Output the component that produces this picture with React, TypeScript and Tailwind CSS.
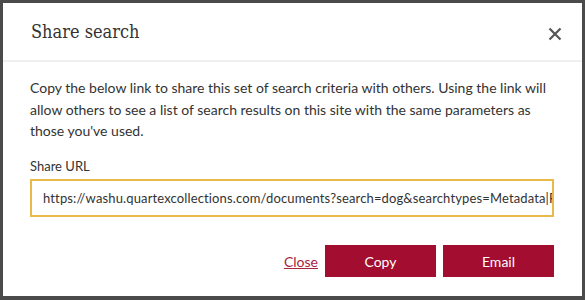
import React from "react";

export default function App() {
  return (
    <div className="w-[585px] h-[300px] bg-[#4b4b4b] pt-[3px] pl-[3px] pr-[3px] pb-[4px]">
      <div className="w-full h-full bg-white flex flex-col" style={{ fontFamily: "Lato, 'Open Sans', sans-serif" }}>
        <div className="h-[59px] shrink-0 flex items-center justify-between pl-[28px] pr-[18px] border-b-2 border-[#f0f0f0]">
          <h2 className="text-[18px] text-[#333333] leading-none pt-[1px]" style={{ fontFamily: "'DejaVu Serif Condensed', 'DejaVu Serif', serif", fontStretch: "condensed" }}>
            Share search
          </h2>
          <button className="w-[18px] h-[18px] flex items-center justify-center mt-[4px]" aria-label="Close">
            <svg width="14" height="14" viewBox="0 0 14 14">
              <path d="M1.5 1.5 L12.5 12.5 M12.5 1.5 L1.5 12.5" stroke="#555555" strokeWidth="2.2" strokeLinecap="butt" />
            </svg>
          </button>
        </div>
        <div className="flex-1 flex flex-col pl-[27px] pr-[28px] pt-[15px] pb-[19px]">
          <p className="text-[14px] leading-[21.5px] text-[#333333]">
            Copy the below link to share this set of search criteria with others. Using the link will allow others to see a list of search results on this site with the same parameters as those you've used.
          </p>
          <label className="mt-[14px] text-[13px] leading-[20px] text-[#333333]">Share URL</label>
          <input
            readOnly
            value="https://washu.quartexcollections.com/documents?search=dog&searchtypes=Metadata|Full"
            className="mt-[3px] h-[38px] w-[524px] border-2 border-[#e9b949] pl-[11px] pr-0 text-[13px] tracking-[0.14px] text-[#333333] outline-none"
            style={{ fontFamily: "Lato, sans-serif" }}
          />
          <div className="mt-auto flex items-center justify-end gap-[7px]">
            <a href="#" className="text-[14px] text-[#a5243f] underline">Close</a>
            <button className="w-[111px] h-[32px] bg-[#a30d2f] text-white text-[14px]">Copy</button>
            <button className="w-[111px] h-[32px] bg-[#a30d2f] text-white text-[14px]">Email</button>
          </div>
        </div>
      </div>
    </div>
  );
}
